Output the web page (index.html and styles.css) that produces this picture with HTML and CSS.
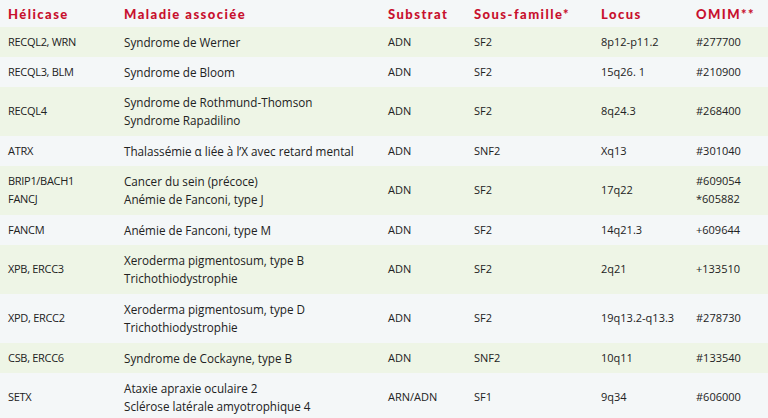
FILE: index.html
```html
<!DOCTYPE html>
<html lang="fr">
<head>
<meta charset="utf-8">
<link rel="stylesheet" href="styles.css">
</head>
<body>
<table class="hel">
  <colgroup>
    <col class="c1"><col class="c2"><col class="c3"><col class="c4"><col class="c5"><col class="c6">
  </colgroup>
  <thead>
    <tr><th>Hélicase</th><th>Maladie associée</th><th>Substrat</th><th>Sous-famille*</th><th>Locus</th><th>OMIM**</th></tr>
  </thead>
  <tbody>
    <tr class="g"><td class="code">RECQL2, WRN</td><td class="dis">Syndrome de Werner</td><td>ADN</td><td>SF2</td><td>8p12-p11.2</td><td>#277700</td></tr>
    <tr><td class="code">RECQL3, BLM</td><td class="dis">Syndrome de Bloom</td><td>ADN</td><td>SF2</td><td>15q26. 1</td><td>#210900</td></tr>
    <tr class="g two"><td class="code">RECQL4</td><td class="dis">Syndrome de Rothmund-Thomson<br>Syndrome Rapadilino</td><td>ADN</td><td>SF2</td><td>8q24.3</td><td>#268400</td></tr>
    <tr><td class="code">ATRX</td><td class="dis">Thalassémie α liée à l’X avec retard mental</td><td>ADN</td><td>SNF2</td><td>Xq13</td><td>#301040</td></tr>
    <tr class="g two"><td class="code">BRIP1/BACH1<br>FANCJ</td><td class="dis">Cancer du sein (précoce)<br>Anémie de Fanconi, type J</td><td>ADN</td><td>SF2</td><td>17q22</td><td>#609054<br>*605882</td></tr>
    <tr><td class="code">FANCM</td><td class="dis">Anémie de Fanconi, type M</td><td>ADN</td><td>SF2</td><td>14q21.3</td><td>+609644</td></tr>
    <tr class="g two"><td class="code">XPB, ERCC3</td><td class="dis">Xeroderma pigmentosum, type B<br>Trichothiodystrophie</td><td>ADN</td><td>SF2</td><td>2q21</td><td>+133510</td></tr>
    <tr class="two"><td class="code">XPD, ERCC2</td><td class="dis">Xeroderma pigmentosum, type D<br>Trichothiodystrophie</td><td>ADN</td><td>SF2</td><td>19q13.2-q13.3</td><td>#278730</td></tr>
    <tr class="g"><td class="code">CSB, ERCC6</td><td class="dis">Syndrome de Cockayne, type B</td><td>ADN</td><td>SNF2</td><td>10q11</td><td>#133540</td></tr>
    <tr class="two"><td class="code">SETX</td><td class="dis">Ataxie apraxie oculaire 2<br>Sclérose latérale amyotrophique 4</td><td>ARN/ADN</td><td>SF1</td><td>9q34</td><td>#606000</td></tr>
  </tbody>
</table>
</body>
</html>
```
FILE: styles.css
```css
html, body {
  margin: 0;
  padding: 0;
  background: #f4f7f8;
}
.hel {
  width: 768px;
  table-layout: fixed;
  border-collapse: collapse;
  font-family: "Open Sans", "DejaVu Sans", sans-serif;
  font-size: 11px;
  color: #222;
}
.c1 { width: 116px; }
.c2 { width: 264px; }
.c3 { width: 86px; }
.c4 { width: 127px; }
.c5 { width: 95px; }
.c6 { width: 80px; }
.hel th {
  text-align: left;
  font-family: "Lato", "Open Sans", sans-serif;
  font-weight: 900;
  font-size: 13px;
  letter-spacing: 1.45px;
  color: #c8102e;
  padding: 5px 0 4px 8px;
  line-height: 18px;
  height: 18px;
  white-space: nowrap;
}
.hel td {
  padding: 6px 0 6px 8px;
  line-height: 18px;
  vertical-align: middle;
  white-space: nowrap;
}
.hel tr.two td {
  padding-top: 6px;
  padding-bottom: 7px;
}
.hel td.code {
  letter-spacing: -0.3px;
}
.hel td.dis {
  font-size: 11.7px;
}
.hel tr.g td {
  background: #eef5e6;
}
```
